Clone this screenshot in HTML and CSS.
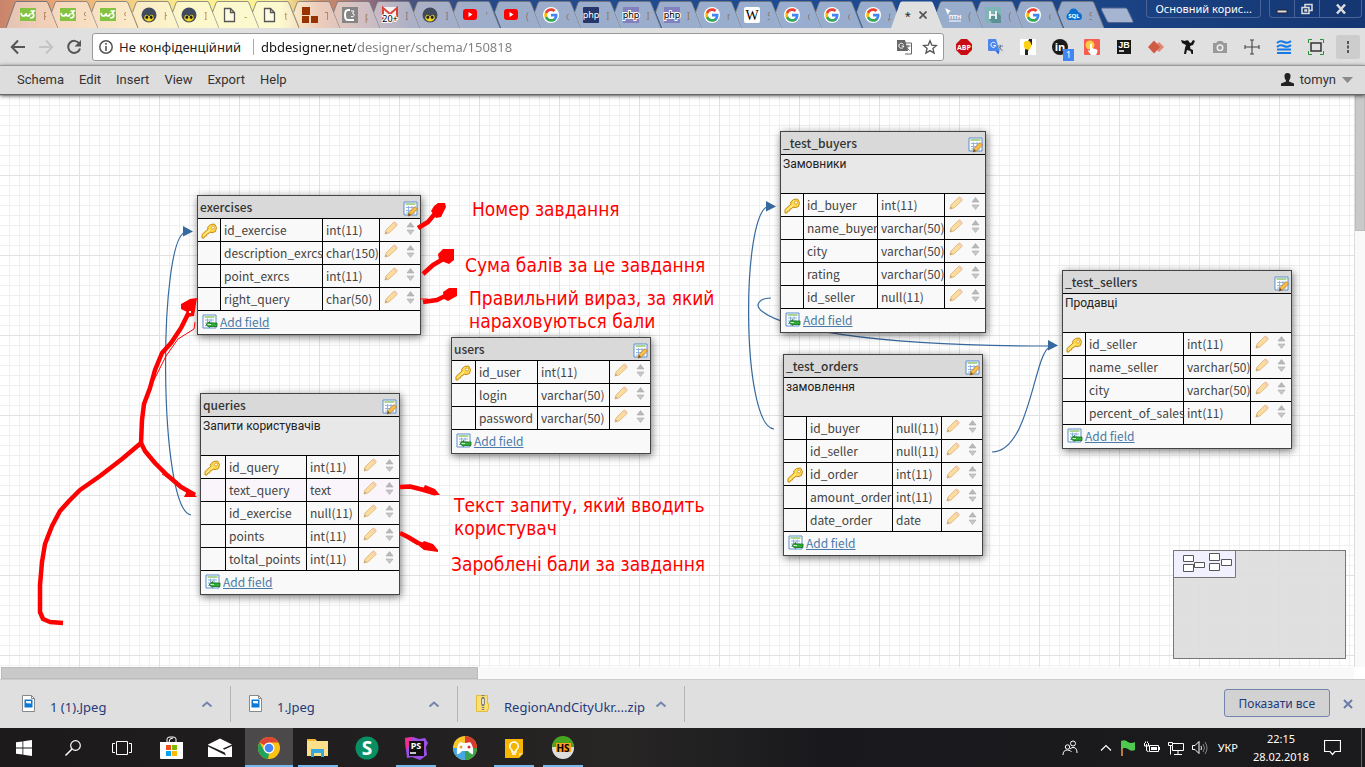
FILE: index.html
```html
<!DOCTYPE html>
<html lang="uk">
<head>
    <meta charset="UTF-8">
    <meta name="viewport" content="width=device-width, initial-scale=1.0">
    <title>dbdesigner.net</title>
    <link rel="stylesheet" href="styles.css">
</head>
<body>

<svg class="sprite" aria-hidden="true">
    <!-- tab outlines -->
    <symbol id="tab" viewBox="0 0 52 28"><path d="M12 28 5.7 12 9 3q.5-1.500 2-1.500h29q1.500 0 2 1.500L52 28z" fill="#fff" fill-opacity=".55"/><path d="M5.700 12 9 3q.5-1.500 2-1.500h29q1.500 0 2 1.500L52 28" fill="none" stroke="#777" stroke-opacity=".8"/></symbol>
    <symbol id="tab-first" viewBox="0 0 52 28"><path d="M0 28 9 3q.5-1.500 2-1.500h29q1.500 0 2 1.500L52 28" fill="#fff" fill-opacity=".5" stroke="#777"/></symbol>
    <symbol id="tab-active" viewBox="0 0 52 28"><path d="M0 28 9 3q.5-1.500 2-1.500h29q1.500 0 2 1.500L52 28" fill="#e0e0e0"/></symbol>

    <!-- favicons -->
    <symbol id="w3" viewBox="0 0 16 16"><path fill="#83c341" d="M0 1h16v13H0z"/><path d="M1 6q.5 3 2.500 3T6 6.500Q6.500 9 8 9t2-2.500M10.500 4H14l-2 2.500q2.500.5 1.500 3Q12.500 11.500 10 10.500" fill="none" stroke="#fff" stroke-width="1.700"/></symbol>
    <symbol id="beetle" viewBox="0 0 16 16"><circle cx="8" cy="8" r="7.500" fill="#3f4a5c"/><path d="M4 8.500q1.500-2 4 1 2.500-3 4-1 2 3-1 5-3 2-6 0-3-2-1-5z" fill="#f0d421"/><ellipse cx="5.800" cy="10.300" rx="1.400" ry="1.700" fill="#222"/><ellipse cx="10.200" cy="10.300" rx="1.400" ry="1.700" fill="#222"/></symbol>
    <symbol id="doc" viewBox="0 0 16 16"><path d="M3.500 1.500h6l4 4v9h-10zM9.500 1.500v4h4" fill="#fff" fill-opacity=".4" stroke="#555" stroke-width="1.300"/></symbol>
    <symbol id="blocks" viewBox="0 0 16 16"><path fill="#993300" d="M0 0h8v8H0zM0 9h7v7H0zM9 9h7v7H9z"/></symbol>
    <symbol id="cz" viewBox="0 0 16 16"><path fill="#858585" d="M0 0h16v16H0z"/><path d="M8 3H6Q3 3 3 8t3 5h6" fill="none" stroke="#fff" stroke-width="2"/><path d="M9 4h3L10.500 6.500q2 0 1.500 2t-3 1" fill="none" stroke="#fff"/></symbol>
    <symbol id="youtube" viewBox="0 0 16 16"><rect x="1" y="2" width="14" height="11" rx="3" fill="#f00"/><path d="m6.500 5 4 2.500-4 2.500z" fill="#fff"/></symbol>
    <symbol id="google" viewBox="-1 -1 26 26"><circle cx="12" cy="12" r="13" fill="#fff"/><path fill="#4285f4" d="M22.560 12.250c0-.78-.07-1.530-.2-2.250H12v4.260h5.920c-.26 1.370-1.040 2.530-2.210 3.310v2.770h3.570c2.080-1.920 3.280-4.740 3.280-8.090z"/><path fill="#34a853" d="M12 23c2.970 0 5.460-.98 7.280-2.660l-3.570-2.770c-.98.66-2.230 1.060-3.710 1.060-2.860 0-5.290-1.930-6.160-4.530H2.180v2.840C3.990 20.530 7.700 23 12 23z"/><path fill="#fbbc05" d="M5.840 14.090c-.22-.66-.35-1.360-.35-2.090s.13-1.430.35-2.090V7.070H2.180C1.430 8.550 1 10.220 1 12s.43 3.450 1.180 4.930l3.660-2.840z"/><path fill="#ea4335" d="M12 5.380c1.620 0 3.060.56 4.210 1.640l3.150-3.150C17.450 2.090 14.970 1 12 1 7.700 1 3.990 3.470 2.180 7.070l3.660 2.840c.87-2.600 3.300-4.530 6.160-4.530z"/></symbol>
    <symbol id="h-box" viewBox="0 0 16 16"><path fill="#7fb5b5" d="M0 0h16v16H0z"/><path d="m11 4 5 5v7H7l-3-4z" fill="#5d9294"/><path d="M5 4v8M11 4v8M5 8h6" stroke="#fff" stroke-width="1.700"/></symbol>

    <!-- diagram icons -->
    <symbol id="key" viewBox="0 0 16 16"><path d="M9.500 1.500 13.500 1l2 3.500-1 4-3.500 1.200-2-.7-1 1.500-2 .5-.5 2-2 .2L3 15H1v-3.500l6-5.500-.3-2z" fill="#ffd94d" stroke="#c98c13"/><path d="m2 13.500 7-6.500" stroke="#fff3ae"/><circle cx="12" cy="4.500" r="1.500" fill="#fff" stroke="#c98c13" stroke-width=".7"/></symbol>
    <symbol id="pencil" viewBox="0 0 14 14"><path d="m1 13 1-4 7.500-7.500 1.500-.5L13 3v1.500L5 12z" fill="#fbdca0" stroke="#e2b878" stroke-width=".9"/><path d="m9 2.500 2.500 2.500L13 4V2.500L11.500 1z" fill="#f3ccb5"/><path d="m1 13 .7-2.500L3.500 12z" fill="#b9a48a"/></symbol>
    <symbol id="updown" viewBox="0 0 9 13"><path d="M4.500.500 8 5H1z" fill="#b8b8b8" stroke="#aaa" stroke-width=".6"/><path d="M1 8h7l-3.500 4.500z" fill="#c8c8c8" stroke="#aaa" stroke-width=".6"/></symbol>
    <symbol id="table-edit" viewBox="0 0 16 16"><path d="M1 1h13v13H1z" fill="#fff" stroke="#5b8dcc"/><path d="M2.500 3h10" stroke="#82bd55" stroke-width="1.300"/><path d="M3 6.500h9M3 9.500h9M3 12h9M5.500 5v8M9 5v8" stroke="#91b4e0"/><path d="m5 15 1-3.500 6-6L14.500 8l-6 6z" fill="#f9bd49" stroke="#b97218" stroke-width=".7"/><path d="m6 12 2 2-3 1z" fill="#6d5030"/></symbol>
    <symbol id="table-add" viewBox="0 0 16 15"><path d="M1 .500h13v13H1z" fill="#fff" stroke="#5b8dcc"/><path d="M2.500 2.500h10" stroke="#82bd55" stroke-width="1.300"/><path d="M3 5.500h9M3 8.500h9M3 11h9M5.500 4v8M9 4v8" stroke="#8aaed8"/><path d="m4 10 3.500-3v1.500h7.500v3.500H7.500V13z" fill="#2eae35" stroke="#176c1c" stroke-width=".8"/><path d="M5.500 10H9" stroke="#cfeecf"/></symbol>
    <symbol id="chevron" viewBox="0 0 12 8"><path d="m1.500 6.500 4.500-4 4.500 4" fill="none" stroke="#7484ac" stroke-width="2"/></symbol>
    <symbol id="jpeg" viewBox="0 0 13 17"><path d="M.500.500h9l3 3v13H.500z" fill="#fff" stroke="#888"/><path d="M9.500.500v3h3" fill="none" stroke="#888"/><path d="M2.500 4.500h8v8h-8z" fill="#0d79d5"/><path d="M4 6h5v2L8 9 7 7.500 6 9 5 7.500 4 8.500z" fill="#fff"/></symbol>
</svg>

<header class="tabstrip">
    <nav class="tabs">
        <a class="tab" href="#"><svg class="tab-shape"><use href="#tab-first"/></svg><svg class="favicon"><use href="#w3"/></svg><span class="tab-title">F</span></a>
        <a class="tab" href="#"><svg class="tab-shape"><use href="#tab"/></svg><svg class="favicon"><use href="#w3"/></svg><span class="tab-title">S</span></a>
        <a class="tab" href="#"><svg class="tab-shape"><use href="#tab"/></svg><svg class="favicon"><use href="#w3"/></svg><span class="tab-title">S</span></a>
        <a class="tab" href="#"><svg class="tab-shape"><use href="#tab"/></svg><svg class="favicon"><use href="#beetle"/></svg><span class="tab-title">H</span></a>
        <a class="tab" href="#"><svg class="tab-shape"><use href="#tab"/></svg><svg class="favicon"><use href="#beetle"/></svg><span class="tab-title">I</span></a>
        <a class="tab" href="#"><svg class="tab-shape"><use href="#tab"/></svg><svg class="favicon"><use href="#doc"/></svg><span class="tab-title">-</span></a>
        <a class="tab" href="#"><svg class="tab-shape"><use href="#tab"/></svg><svg class="favicon"><use href="#doc"/></svg><span class="tab-title">t</span></a>
        <a class="tab" href="#"><svg class="tab-shape"><use href="#tab"/></svg><svg class="favicon"><use href="#blocks"/></svg><span class="tab-title">T</span></a>
        <a class="tab" href="#"><svg class="tab-shape"><use href="#tab"/></svg><svg class="favicon"><use href="#cz"/></svg><span class="tab-title">p</span></a>
        <a class="tab" href="#"><svg class="tab-shape"><use href="#tab"/></svg><svg class="favicon" viewBox="0 0 16 16"><path fill="#f4f4f4" d="M0 0h16v12H0z"/><path d="M1 12V1l7 6 7-6v11" fill="none" stroke="#db4437" stroke-width="2"/><text x="8" y="15" class="fav-text">20+</text></svg><span class="tab-title">I</span></a>
        <a class="tab" href="#"><svg class="tab-shape"><use href="#tab"/></svg><svg class="favicon"><use href="#beetle"/></svg><span class="tab-title">I</span></a>
        <a class="tab" href="#"><svg class="tab-shape"><use href="#tab"/></svg><svg class="favicon"><use href="#youtube"/></svg><span class="tab-title">'</span></a>
        <a class="tab" href="#"><svg class="tab-shape"><use href="#tab"/></svg><svg class="favicon"><use href="#youtube"/></svg><span class="tab-title">(</span></a>
        <a class="tab" href="#"><svg class="tab-shape"><use href="#tab"/></svg><svg class="favicon"><use href="#google"/></svg><span class="tab-title">c</span></a>
        <a class="tab" href="#"><svg class="tab-shape"><use href="#tab"/></svg><svg class="favicon" viewBox="0 0 16 16"><rect width="16" height="16" rx="1" fill="#26366b"/><text x="8" y="11" class="fav-text fav-light">php</text></svg><span class="tab-title">I</span></a>
        <a class="tab" href="#"><svg class="tab-shape"><use href="#tab"/></svg><svg class="favicon" viewBox="0 0 16 16"><path fill="#8280bd" d="M0 0h16v16H0z"/><text x="8" y="11" class="fav-text">php</text></svg><span class="tab-title">I</span></a>
        <a class="tab" href="#"><svg class="tab-shape"><use href="#tab"/></svg><svg class="favicon" viewBox="0 0 16 16"><path fill="#8280bd" d="M0 0h16v16H0z"/><text x="8" y="11" class="fav-text">php</text></svg><span class="tab-title">I</span></a>
        <a class="tab" href="#"><svg class="tab-shape"><use href="#tab"/></svg><svg class="favicon"><use href="#google"/></svg><span class="tab-title">r</span></a>
        <a class="tab" href="#"><svg class="tab-shape"><use href="#tab"/></svg><svg class="favicon" viewBox="0 0 16 16"><rect width="16" height="16" rx="2" fill="#fff"/><text x="8" y="13" class="fav-wiki">W</text></svg><span class="tab-title">S</span></a>
        <a class="tab" href="#"><svg class="tab-shape"><use href="#tab"/></svg><svg class="favicon"><use href="#google"/></svg><span class="tab-title">c</span></a>
        <a class="tab" href="#"><svg class="tab-shape"><use href="#tab"/></svg><svg class="favicon"><use href="#google"/></svg><span class="tab-title">c</span></a>
        <a class="tab" href="#"><svg class="tab-shape"><use href="#tab"/></svg><svg class="favicon"><use href="#google"/></svg><span class="tab-title">д</span></a>
        <div class="tab active"><svg class="tab-shape"><use href="#tab-active"/></svg><span>*</span><button class="tab-close" aria-label="Закрити"><svg viewBox="0 0 8 8" width="8" height="8"><path d="m.500.500 7 7m0-7-7 7" stroke="#555" stroke-width="1.700"/></svg></button></div>
        <a class="tab" href="#"><svg class="tab-shape"><use href="#tab"/></svg><svg class="favicon" viewBox="0 0 16 16"><path d="m0 1 6 3-2 1-1 3z" fill="#fff"/><text x="10" y="12" class="fav-text fav-small">ПТН</text><path d="M4 14h12" stroke="#fff"/></svg><span class="tab-title">(</span></a>
        <a class="tab" href="#"><svg class="tab-shape"><use href="#tab"/></svg><svg class="favicon"><use href="#h-box"/></svg><span class="tab-title">(</span></a>
        <a class="tab" href="#"><svg class="tab-shape"><use href="#tab"/></svg><svg class="favicon"><use href="#google"/></svg><span class="tab-title">c</span></a>
        <a class="tab" href="#"><svg class="tab-shape"><use href="#tab"/></svg><svg class="favicon" viewBox="0 0 16 16"><path d="M3 13q-3-1-2.500-4T3 6q1-5 5-4.500 3 0 4 3.500 4 1 4 4.500T13 13z" fill="#0b6fcf"/><text x="8" y="11" class="fav-text fav-small">SQL</text></svg><span class="tab-title">S</span></a>
    </nav>
    <button class="new-tab" aria-label="Нова вкладка"><svg viewBox="0 0 34 17" width="34" height="17"><path d="M2.500 1h23q1.500 0 2 1.500L33 14q.5 1.500-1 1.500H9q-1.500 0-2-1.500L1.500 3Q1 1 2.500 1z" fill="#a5b4d0" stroke="#52668f"/></svg></button>
    <button class="profile">Основний корис...</button>
    <div class="window-buttons">
        <button aria-label="Згорнути"><svg viewBox="0 0 12 12" width="12" height="12"><path d="M1 7h10v3H1z" fill="#ddd" stroke="#223"/></svg></button>
        <button aria-label="Відновити"><svg viewBox="0 0 12 12" width="12" height="12"><path d="M4 4V1.500h7v6H8.500M1 4.500h7v6H1zM4 7h1.500v1H4z" fill="none" stroke="#ddd" stroke-width="1.500"/></svg></button>
        <button class="wide" aria-label="Закрити вікно"><svg viewBox="0 0 12 12" width="12" height="12"><path d="m2 1.500 8 9m0-9-8 9" stroke="#ddd" stroke-width="2.500"/></svg></button>
    </div>
</header>

<div class="toolbar">
    <button aria-label="Назад"><svg viewBox="0 0 16 16" width="16" height="16"><path d="M15 8H2.500M8 1.500 1.800 8 8 14.500" fill="none" stroke="#555" stroke-width="2"/></svg></button>
    <button aria-label="Вперед"><svg viewBox="0 0 16 16" width="16" height="16"><path d="M1 8h12.500M8 1.500 14.200 8 8 14.500" fill="none" stroke="#c4c4c4" stroke-width="2"/></svg></button>
    <button aria-label="Оновити"><svg viewBox="0 0 16 16" width="16" height="16"><path d="M13.200 4.500A6 6 0 1 0 14 9.500" fill="none" stroke="#555" stroke-width="2"/><path d="M15 1v6.500H8.500z" fill="#555"/></svg></button>
    <div class="omnibox">
        <svg viewBox="0 0 14 14" width="14" height="14"><circle cx="7" cy="7" r="6.200" fill="none" stroke="#555" stroke-width="1.500"/><path d="M7 6v5M7 3v1.800" stroke="#555" stroke-width="1.600"/></svg>
        <label for="address">Не конфіденційний</label>
        <input id="address" type="text" value="dbdesigner.net/designer/schema/150818">
        <button aria-label="Перекласти"><svg viewBox="0 0 16 16" width="16" height="16"><path d="M6 4h9.500v11H9" fill="#fff" stroke="#666"/><path d="M1 1h8l3 11H1z" fill="#666"/><path d="M7.500 5.500A2.500 2.500 0 1 0 7.800 7H5.500" fill="none" stroke="#fff"/><path d="M9.500 7h5M12 6v1c0 2-1 3.500-2 4.500M10.500 8.500l3 3" fill="none" stroke="#666"/></svg></button>
        <button aria-label="Закладка"><svg viewBox="0 0 16 16" width="16" height="16"><path d="m8 1.800 1.800 4.300 4.700.4-3.600 3 1.200 4.600L8 11.600l-4.100 2.500 1.200-4.600-3.600-3 4.700-.4z" fill="none" stroke="#555" stroke-width="1.300"/></svg></button>
    </div>
    <div class="extensions">
        <button aria-label="ABP"><svg viewBox="0 0 16 16" width="16" height="16"><path d="M5 0h6l5 5v6l-5 5H5l-5-5V5z" fill="#c70d12"/><text x="8" y="11" class="ext-abp">ABP</text></svg></button>
        <button aria-label="Перекладач"><svg viewBox="0 0 16 16" width="16" height="16"><path d="M6 4h9.500v11.500H10z" fill="#ddd"/><path d="M0 1q0-1 1-1h7l3.500 12H1q-1 0-1-1z" fill="#4b87ea"/><path d="m7.500 12 3 3.500 1-3.500z" fill="#3367d6"/><path d="M7.500 4.500A2.500 2.500 0 1 0 7.800 6.500H5.500" fill="none" stroke="#fff"/><path d="M10 7h5M12.500 6v1c0 2-.5 3-1 4M11 8l3.500 4" fill="none" stroke="#6b7f99"/></svg></button>
        <button aria-label="Маркер"><svg viewBox="0 0 16 16" width="16" height="16"><path fill="#fff" d="M0 0h16v16H0z"/><path d="M9 0h3v5l-4 7v4H5v-5z" fill="#222"/><path d="M4 3q5-3 7 1 1 4-2 7l-4-1q-2-3-1-7z" fill="#fcd116"/></svg></button>
        <button aria-label="in"><svg viewBox="0 0 16 16" width="16" height="16"><circle cx="8" cy="8" r="8" fill="#1b1b1b"/><text x="8" y="12" class="ext-in">in</text></svg><span class="badge">1</span></button>
        <button aria-label="Клік"><svg viewBox="0 0 16 16" width="16" height="16"><rect width="16" height="16" rx="1" fill="#f45d4f"/><circle cx="6" cy="6" r="4.500" fill="#fdcb45"/><path d="M6 5q1-1 2 0v4l5 1.500q1 1 0 3.500l-1 2H7l-3-4q0-1.500 2 0z" fill="#fff"/></svg></button>
        <button aria-label="JetBrains"><svg viewBox="0 0 16 16" width="16" height="16"><path fill="#161616" d="M1 1h14v14H1z"/><text x="8" y="9" class="ext-jb">JB</text><path d="M3 12h5" stroke="#fff" stroke-width="1.500"/></svg></button>
        <button aria-label="Ромби"><svg viewBox="0 0 16 16" width="16" height="16"><path d="m11 3 5 5-5 5-5-5z" fill="#e08672"/><path d="m6 1.500 6 6.500-6 6.500L0 8z" fill="#cf5b45"/></svg></button>
        <button aria-label="Ніндзя"><svg viewBox="0 0 16 16" width="16" height="16"><path d="M1 1 5 2q2-1 3 1l3 1 2-3 2 1-2 4-3 1 .5 3L13 11v4h-1.500l-1-3L7 11l-1 4H4l1-6 1-3-4-2z" fill="#151515"/><circle cx="7" cy="3.500" r="2.200" fill="#151515"/></svg></button>
        <button aria-label="Камера"><svg viewBox="0 0 16 16" width="16" height="16"><path d="M1 4h3l2-2h4l2 2h3v10H1z" fill="#999"/><circle cx="8" cy="8.700" r="3.500" fill="#eee"/><circle cx="8" cy="8.700" r="2" fill="#999"/></svg></button>
        <button aria-label="Приціл"><svg viewBox="0 0 16 16" width="16" height="16"><path d="M8 1v14M1 8h14M6 1h4M6 15h4M1 6v4M15 6v4" stroke="#444" stroke-width="1.100"/></svg></button>
        <button aria-label="Хвилі"><svg viewBox="0 0 16 16" width="16" height="16"><path d="M1 4q3-3 7-1t7-1M1 8q3-3 7-1t7-1M1 10.500h14M1 14h14" fill="none" stroke="#1679e5" stroke-width="2"/></svg></button>
        <button aria-label="Рамка"><svg viewBox="0 0 16 16" width="16" height="16"><path d="M3 4h10v8H3z" fill="none" stroke="#333" stroke-width="1.500"/><path d="M.500 4V.500H4M12 .500h3.500V4M15.500 12v3.500H12M4 15.500H.500V12" fill="none" stroke="#279131"/></svg></button>
        <button class="more" aria-label="Меню"><svg viewBox="0 0 16 16" width="16" height="16"><path d="M7 2h2v3H7zM7 6.500h2v3H7zM7 11h2v3H7z" fill="#555"/></svg></button>
    </div>
</div>

<nav class="menubar">
    <button>Schema</button>
    <button>Edit</button>
    <button>Insert</button>
    <button>View</button>
    <button>Export</button>
    <button>Help</button>
    <button class="user">
        <svg viewBox="0 0 13 13" width="13" height="13"><path d="M6.500 0Q10 0 9.500 4 9 7 8 7.500v1L13 10.500V13H0v-2.500l5-2v-1Q4 7 3.500 4 3 0 6.500 0z" fill="#222"/></svg>
        tomyn
        <svg viewBox="0 0 11 6" width="11" height="6"><path d="M0 0h11L5.500 6z" fill="#8a8a8a"/></svg>
    </button>
</nav>

<main class="workspace">
    <div class="canvas">
        <svg class="links">
            <g transform="translate(0 -95)" fill="none" stroke="#36699f" stroke-width="1.200">
                <path d="M191 515C158 510 158 235 186 232"/>
                <path d="M774 429C741 426 741 210 769 206"/>
                <path d="M771 298C758 298 754 306 763 312C783 327 860 346 1050 346"/>
                <path d="M992 452C1030 452 1034 352 1050 347"/>
            </g>
            <g transform="translate(0 -95)" fill="#36699f">
                <path d="m183 226 10 5.500-10 5zM766 201l10 5.500-10 5zM1048 340l10 5.500-10 5z"/>
            </g>
        </svg>

        <section class="entity exercises">
            <h2>exercises <button aria-label="Edit table"><svg class="icon"><use href="#table-edit"/></svg></button></h2>
            <table>
                <tr><td class="col-key"><svg class="icon"><use href="#key"/></svg></td><td class="col-name">id_exercise</td><td class="col-type">int(11)</td><td><svg class="pencil"><use href="#pencil"/></svg><svg class="updown"><use href="#updown"/></svg></td></tr>
                <tr><td></td><td>description_exrcs</td><td>char(150)</td><td><svg class="pencil"><use href="#pencil"/></svg><svg class="updown"><use href="#updown"/></svg></td></tr>
                <tr><td></td><td>point_exrcs</td><td>int(11)</td><td><svg class="pencil"><use href="#pencil"/></svg><svg class="updown"><use href="#updown"/></svg></td></tr>
                <tr><td></td><td>right_query</td><td>char(50)</td><td><svg class="pencil"><use href="#pencil"/></svg><svg class="updown"><use href="#updown"/></svg></td></tr>
            </table>
            <footer><svg class="icon"><use href="#table-add"/></svg><a href="#">Add field</a></footer>
        </section>

        <section class="entity queries">
            <h2>queries <button aria-label="Edit table"><svg class="icon"><use href="#table-edit"/></svg></button></h2>
            <p>Запити користувачів</p>
            <table>
                <tr><td class="col-key"><svg class="icon"><use href="#key"/></svg></td><td class="col-name">id_query</td><td class="col-type">int(11)</td><td><svg class="pencil"><use href="#pencil"/></svg><svg class="updown"><use href="#updown"/></svg></td></tr>
                <tr class="selected"><td></td><td>text_query</td><td>text</td><td><svg class="pencil"><use href="#pencil"/></svg><svg class="updown"><use href="#updown"/></svg></td></tr>
                <tr><td></td><td>id_exercise</td><td>null(11)</td><td><svg class="pencil"><use href="#pencil"/></svg><svg class="updown"><use href="#updown"/></svg></td></tr>
                <tr><td></td><td>points</td><td>int(11)</td><td><svg class="pencil"><use href="#pencil"/></svg><svg class="updown"><use href="#updown"/></svg></td></tr>
                <tr><td></td><td>toltal_points</td><td>int(11)</td><td><svg class="pencil"><use href="#pencil"/></svg><svg class="updown"><use href="#updown"/></svg></td></tr>
            </table>
            <footer><svg class="icon"><use href="#table-add"/></svg><a href="#">Add field</a></footer>
        </section>

        <section class="entity users">
            <h2>users <button aria-label="Edit table"><svg class="icon"><use href="#table-edit"/></svg></button></h2>
            <table>
                <tr><td class="col-key"><svg class="icon"><use href="#key"/></svg></td><td class="col-name">id_user</td><td class="col-type">int(11)</td><td><svg class="pencil"><use href="#pencil"/></svg><svg class="updown"><use href="#updown"/></svg></td></tr>
                <tr><td></td><td>login</td><td>varchar(50)</td><td><svg class="pencil"><use href="#pencil"/></svg><svg class="updown"><use href="#updown"/></svg></td></tr>
                <tr><td></td><td>password</td><td>varchar(50)</td><td><svg class="pencil"><use href="#pencil"/></svg><svg class="updown"><use href="#updown"/></svg></td></tr>
            </table>
            <footer><svg class="icon"><use href="#table-add"/></svg><a href="#">Add field</a></footer>
        </section>

        <section class="entity buyers">
            <h2>_test_buyers <button aria-label="Edit table"><svg class="icon"><use href="#table-edit"/></svg></button></h2>
            <p>Замовники</p>
            <table>
                <tr><td class="col-key"><svg class="icon"><use href="#key"/></svg></td><td class="col-name">id_buyer</td><td class="col-type">int(11)</td><td><svg class="pencil"><use href="#pencil"/></svg><svg class="updown"><use href="#updown"/></svg></td></tr>
                <tr><td></td><td>name_buyer</td><td>varchar(50)</td><td><svg class="pencil"><use href="#pencil"/></svg><svg class="updown"><use href="#updown"/></svg></td></tr>
                <tr><td></td><td>city</td><td>varchar(50)</td><td><svg class="pencil"><use href="#pencil"/></svg><svg class="updown"><use href="#updown"/></svg></td></tr>
                <tr><td></td><td>rating</td><td>varchar(50)</td><td><svg class="pencil"><use href="#pencil"/></svg><svg class="updown"><use href="#updown"/></svg></td></tr>
                <tr><td></td><td>id_seller</td><td>null(11)</td><td><svg class="pencil"><use href="#pencil"/></svg><svg class="updown"><use href="#updown"/></svg></td></tr>
            </table>
            <footer><svg class="icon"><use href="#table-add"/></svg><a href="#">Add field</a></footer>
        </section>

        <section class="entity orders">
            <h2>_test_orders <button aria-label="Edit table"><svg class="icon"><use href="#table-edit"/></svg></button></h2>
            <p>замовлення</p>
            <table>
                <tr><td class="col-key"></td><td class="col-name">id_buyer</td><td class="col-type">null(11)</td><td><svg class="pencil"><use href="#pencil"/></svg><svg class="updown"><use href="#updown"/></svg></td></tr>
                <tr><td></td><td>id_seller</td><td>null(11)</td><td><svg class="pencil"><use href="#pencil"/></svg><svg class="updown"><use href="#updown"/></svg></td></tr>
                <tr><td class="col-key"><svg class="icon"><use href="#key"/></svg></td><td>id_order</td><td>int(11)</td><td><svg class="pencil"><use href="#pencil"/></svg><svg class="updown"><use href="#updown"/></svg></td></tr>
                <tr><td></td><td>amount_order</td><td>int(11)</td><td><svg class="pencil"><use href="#pencil"/></svg><svg class="updown"><use href="#updown"/></svg></td></tr>
                <tr><td></td><td>date_order</td><td>date</td><td><svg class="pencil"><use href="#pencil"/></svg><svg class="updown"><use href="#updown"/></svg></td></tr>
            </table>
            <footer><svg class="icon"><use href="#table-add"/></svg><a href="#">Add field</a></footer>
        </section>

        <section class="entity sellers">
            <h2>_test_sellers <button aria-label="Edit table"><svg class="icon"><use href="#table-edit"/></svg></button></h2>
            <p>Продавці</p>
            <table>
                <tr><td class="col-key"><svg class="icon"><use href="#key"/></svg></td><td class="col-name">id_seller</td><td class="col-type">int(11)</td><td><svg class="pencil"><use href="#pencil"/></svg><svg class="updown"><use href="#updown"/></svg></td></tr>
                <tr><td></td><td>name_seller</td><td>varchar(50)</td><td><svg class="pencil"><use href="#pencil"/></svg><svg class="updown"><use href="#updown"/></svg></td></tr>
                <tr><td></td><td>city</td><td>varchar(50)</td><td><svg class="pencil"><use href="#pencil"/></svg><svg class="updown"><use href="#updown"/></svg></td></tr>
                <tr><td></td><td>percent_of_sales</td><td>int(11)</td><td><svg class="pencil"><use href="#pencil"/></svg><svg class="updown"><use href="#updown"/></svg></td></tr>
            </table>
            <footer><svg class="icon"><use href="#table-add"/></svg><a href="#">Add field</a></footer>
        </section>

        <!-- hand-drawn notes -->
        <svg class="links marks">
            <g transform="translate(0 -95)" fill="none" stroke="#f00" stroke-width="4.500" stroke-linejoin="round">
                <path d="M190 310 181 328 171 343 162 353 155 370 150 388 144 404 142 420 141 443 122 459 100 476 80 490 70 500 60 511 52 526 45 544 42 562 40 585 40 612 43 619 50 622 63 623"/>
                <path d="m141 443 4 8 10 12 12 12 14 12 14 8"/>
                <path d="m418 228 10-6 10-12M423 274l10-9 12-7M423 302l14-2 12-6M400 487l10-.5 12 3 14 4M400 533l8 4 10 6 16 6"/>
                <path d="m195 322-1 7-16 10-12 17-11 22-7 14M420 299h8M162 474l8 5" stroke-width="1"/>
            </g>
            <g transform="translate(0 -95)" fill="#f00">
                <path d="m181 304 9-5 7-1-3 18-7 1v-5l-6-3zM187 488l10 9h-13l2-4zM434 206l4-3h7l1 4-5 10-5 1-5-7zM438 254l5-5h11v11l-5 4-10-4zM443 292l6-4h8v8l-9 5-4-2zM425 485l10 4 5 6h-7l-11-4zM424 541l9 3 5 6v2l-14-2-5-4z"/>
                <path d="M189 311h2v2h-2z" fill="#fff"/>
            </g>
        </svg>
        <p class="note note-number">Номер завдання</p>
        <p class="note note-sum">Сума балів за це завдання</p>
        <p class="note note-right">Правильний вираз, за який<br>нараховуються бали</p>
        <p class="note note-text">Текст запиту, який вводить<br>користувач</p>
        <p class="note note-points">Зароблені бали за завдання</p>

        <div class="minimap">
            <svg viewBox="0 0 64 28" width="64" height="28"><path d="M.500.500h62v27H.500z" fill="#f0f0ff" stroke="#777"/><path d="M10.500 5.500h10v6h-10zM10.500 14.500h10v7h-10zM21.500 12.500h10v5h-10zM36.500 3.500h10v7h-10zM36.500 13.500h10v7h-10zM48.500 9.500h10v6h-10z" fill="#fff" stroke="#555"/></svg>
        </div>
    </div>
    <div class="vscroll"><div class="vthumb"></div></div>
    <div class="hscroll"><div class="hthumb"></div></div>
</main>

<section class="downloads">
    <div class="download"><svg class="file-icon"><use href="#jpeg"/></svg><a href="#">1 (1).Jpeg</a><button aria-label="Дії"><svg class="chevron"><use href="#chevron"/></svg></button></div>
    <div class="download"><svg class="file-icon"><use href="#jpeg"/></svg><a href="#">1.Jpeg</a><button aria-label="Дії"><svg class="chevron"><use href="#chevron"/></svg></button></div>
    <div class="download"><svg class="file-icon" viewBox="0 0 13 17"><path d="M.500.500h11v8h1v6h-1v2H.500z" fill="#fbdf72" stroke="#e5bd3c"/><path d="M7 0v16" stroke="#777" stroke-width="2.500" stroke-dasharray="1 1"/><path d="M5.500 3.500h3v6h-3z" fill="#ddd" stroke="#888"/></svg><a href="#">RegionAndCityUkr....zip</a><button aria-label="Дії"><svg class="chevron"><use href="#chevron"/></svg></button></div>
    <button class="show-all">Показати все</button>
    <button class="close-bar" aria-label="Закрити"><svg viewBox="0 0 10 10" width="10" height="10"><path d="m1 1 8 8m0-8-8 8" stroke="#6a7ca8" stroke-width="2"/></svg></button>
</section>

<footer class="taskbar">
    <button aria-label="Пуск"><svg viewBox="0 0 16 16" width="16" height="16"><path d="m0 2.300 6.500-.9v6.200H0zM7.300 1.300 16 0v7.600H7.300zM0 8.400h6.500v6.200L0 13.700zM7.300 8.400H16V16l-8.700-1.300z" fill="#fff"/></svg></button>
    <button aria-label="Пошук"><svg viewBox="0 0 16 16" width="16" height="16"><circle cx="10.500" cy="5.500" r="4.800" fill="none" stroke="#fff" stroke-width="1.200"/><path d="M7 9 .500 15.500" stroke="#fff" stroke-width="1.500"/></svg></button>
    <button aria-label="Подання завдань"><svg viewBox="0 0 20 16" width="20" height="16"><path d="M4.500 1.500h11v13h-11zM3 3.500H.500v9H3M17 3.500h2.500v9H17" fill="none" stroke="#fff"/></svg></button>
    <button aria-label="Store"><svg viewBox="0 0 24 24" width="24" height="24"><path d="M1 6h23v16q0 1-1 1H2q-1 0-1-1z" fill="#fff"/><path d="M8 6V3q0-2 3-2h3q3 0 3 2v3M10 6q0-4 4-4" fill="none" stroke="#fff"/><path d="M7 9h5v5H7z" fill="#f25022"/><path d="M13 9h5v5h-5z" fill="#7fba00"/><path d="M7 15h5v5H7z" fill="#00a4ef"/><path d="M13 15h5v5h-5z" fill="#ffb900"/></svg></button>
    <button aria-label="Пошта"><svg viewBox="0 0 24 20" width="24" height="20"><path d="m0 6.500 12-6 12 6-9 4 4 5L0 7zM0 8.500l18 9L15.500 12 24 8v11H0z" fill="#fff"/></svg></button>
    <button class="current" aria-label="Chrome"><svg viewBox="0 0 24 24" width="24" height="24"><circle cx="12" cy="12" r="11" fill="#fbc116"/><path d="M12 12 2.500 6.500A11 11 0 0 1 21.500 6.500H12z" fill="#dc4436"/><path d="m2.500 6.500 5 8.500 4.500 2.500L11 23A11 11 0 0 1 2.500 6.500z" fill="#1fa35c"/><circle cx="12" cy="12" r="5.500" fill="#fff"/><circle cx="12" cy="12" r="4.300" fill="#4285f4"/></svg></button>
    <button class="running" aria-label="Провідник"><svg viewBox="0 0 24 20" width="24" height="20"><path d="M1 1h8l2 2h11v15H1z" fill="#fbe089"/><path d="M1 1h8l1 2H1z" fill="#f2b733"/><path d="M5 11h13v8h-3v-4H8v4H5z" fill="#35a9df"/></svg></button>
    <button aria-label="S"><svg viewBox="0 0 24 24" width="24" height="24"><circle cx="12" cy="12" r="11.500" fill="#098f64"/><text x="12" y="19" class="app-s">S</text></svg></button>
    <button class="running" aria-label="PhpStorm"><svg viewBox="0 0 24 24" width="24" height="24"><path d="m1 2 8-1 6 2 6-1 3 5-2 4 1 8-7 5-8-3-5 1-1-8z" fill="#9b4ee8"/><path d="m1 2 8-1-4 9-3 4z" fill="#ef2f93"/><path d="M5 5h15v15H5z" fill="#111"/><text x="12" y="13" class="app-ps">PS</text><path d="M6 17h6" stroke="#fff" stroke-width="1.500"/></svg></button>
    <button aria-label="Ігри"><svg viewBox="0 0 24 24" width="24" height="24"><circle cx="12" cy="12" r="12" fill="#f8c52c"/><path d="M12 0a12 12 0 0 1 12 12H12z" fill="#d93b31"/><path d="M24 12a12 12 0 0 1-12 12V12z" fill="#3ca14c"/><path d="M12 24A12 12 0 0 1 0 12h12z" fill="#45a6e6"/><path d="M7 6q5 2 10 0 4 4 3 12-2 1-5-3H9q-3 4-5 3Q3 10 7 6z" fill="#fff"/><circle cx="8" cy="11" r="1.500" fill="#e8a030"/><circle cx="16" cy="11" r="1.500" fill="#c33"/></svg></button>
    <button class="running" aria-label="Keep"><svg viewBox="0 0 20 20" width="20" height="20"><path d="M1 1h18v15l-4 4H1z" fill="#f6b500"/><path d="m19 15-4 4v-4z" fill="#fbdf88"/><path d="M8 14v-2q-3-2-2-5 1-3 4-3t4 3q1 3-2 5v2zM8 16h4" fill="none" stroke="#fff" stroke-width="1.500"/></svg></button>
    <button class="running" aria-label="HS"><svg viewBox="0 0 24 24" width="24" height="24"><circle cx="12" cy="12" r="11" fill="#ddd"/><path d="M1 11a11 11 0 0 1 22 0z" fill="#48a51f"/><path d="M5 7h15v9H5z" fill="#ff9d21"/><text x="12" y="16" class="app-hs">HS</text></svg></button>

    <div class="tray">
        <svg viewBox="0 0 16 16" width="16" height="16"><circle cx="5.500" cy="7" r="2.200" fill="none" stroke="#fff"/><circle cx="11" cy="3.500" r="2.500" fill="none" stroke="#fff"/><path d="M1 15q0-5 4.500-5 3 0 4 2M8 9q2-2 4-1.500 3 .5 3 5.500" fill="none" stroke="#fff"/></svg>
        <svg class="tray-up" viewBox="0 0 12 8" width="12" height="8"><path d="m1 6.500 5-5 5 5" fill="none" stroke="#fff" stroke-width="1.200"/></svg>
        <svg viewBox="0 0 16 16" width="16" height="16"><path d="M2 4v12" stroke="#b97b45" stroke-width="2"/><path d="M1 1q4-2 7 1 3 2 7 0v8q-4 2-7-1-3-2-7 0z" fill="#4ecb4e"/></svg>
        <svg viewBox="0 0 16 16" width="16" height="16"><path d="M5.500 5.500h9v6h-9zM15.500 7v3M2.500 4v6q0 1.500 2 1.500M.500 3v3h4V3M1.500 1.500V3M3.500 1.500V3" fill="none" stroke="#fff"/><path d="M7 7h6v3H7z" fill="#fff"/></svg>
        <svg viewBox="0 0 16 16" width="16" height="16"><path d="M5 3.500h10.500v7H4.500V6M10 10.500v4M6 14.500h8M.500 2.500h4v3h-4zM2.500 5.500v9" fill="none" stroke="#fff"/></svg>
        <svg viewBox="0 0 16 16" width="16" height="16"><path d="M.500 5.500H3l4-4v12l-4-4H.500zM9 6q1 1.500 0 4" fill="none" stroke="#fff"/><path d="M11 4q3 4 0 8M13 2q4 6 0 12" fill="none" stroke="#888"/></svg>
        <button class="lang">УКР</button>
        <time class="clock">22:15<br>28.02.2018</time>
        <svg viewBox="0 0 17 17" width="17" height="17"><path d="M.500 1.500h16v11H11l-2.500 3-2.500-3H.500z" fill="none" stroke="#fff" stroke-width="1.200"/></svg>
    </div>
</footer>

</body>
</html>
```
FILE: styles.css
```css
* {
    box-sizing: border-box;
}
body {
    display: flex;
    flex-direction: column;
    height: 100vh;
    margin: 0;
    overflow: hidden;
    font-family: "Noto Sans", sans-serif;
    font-size: 13px;
    background-color: #fff;
}
button {
    display: flex;
    align-items: center;
    justify-content: center;
    padding: 0;
    border: none;
    background: none;
    color: inherit;
    font: inherit;
    cursor: pointer;
}
.sprite {
    position: absolute;
    width: 0;
    height: 0;
}

/* tab strip */
.tabstrip {
    display: flex;
    flex: none;
    height: 28px;
    padding-left: 6px;
    background: linear-gradient(90deg, #c8836b 0, #eba872 60px, #fbf08e 190px, #fbf396 280px, #d58d68 320px, #8f6c7d 370px, #4a5280 410px, #26498a 480px, #1c4b94 800px, #1b4486 1100px, #143672 100%);
}
.tabs {
    display: flex;
    flex: 0 1 1086px;
}
.tab {
    position: relative;
    display: flex;
    flex: 1 1 0;
    align-items: center;
    gap: 7px;
    min-width: 0;
    padding: 2px 0 0 14px;
    color: #8a5a30;
    font-size: 11px;
    text-decoration: none;
}
.tab-shape {
    position: absolute;
    top: 0;
    left: 0;
    width: 52px;
    height: 28px;
}
.favicon {
    position: relative;
    flex: none;
    width: 16px;
    height: 16px;
    overflow: visible;
}
.tab-title {
    position: relative;
    flex: none;
    width: 3px;
    overflow: hidden;
    opacity: .6;
}
.tab.active {
    gap: 8px;
    color: #222;
}
.tab.active span,
.tab-close {
    position: relative;
}
.new-tab {
    margin: 7px 0 0 8px;
    align-self: flex-start;
}
.profile {
    align-self: flex-start;
    height: 18px;
    margin-left: auto;
    padding: 0 8px;
    border: 1px solid #4a6498;
    border-top: none;
    border-radius: 0 0 4px 4px;
    color: #fff;
    font-size: 11px;
    white-space: nowrap;
}
.window-buttons {
    display: flex;
    height: 18px;
    margin: 0 3px 0 8px;
    border: 1px solid #4a6498;
    border-top: none;
    border-radius: 0 0 4px 4px;
}
.window-buttons button {
    width: 25px;
    border-right: 1px solid #4a6498;
}
.window-buttons .wide {
    width: 41px;
    border-right: none;
}
.fav-text {
    fill: #000;
    stroke: #fff;
    stroke-width: 2px;
    paint-order: stroke;
    font: 9px "Noto Sans", sans-serif;
    text-anchor: middle;
}
.fav-light {
    fill: #fff;
    stroke: none;
}
.fav-small {
    fill: #fff;
    stroke: none;
    font-size: 6px;
    font-weight: bold;
}
.fav-wiki {
    font: 14px "Liberation Serif", serif;
    text-anchor: middle;
}

/* toolbar */
.toolbar {
    display: flex;
    flex: none;
    align-items: center;
    gap: 12px;
    height: 37px;
    padding: 1px 5px 0 10px;
    background-color: #e0e0e0;
}
.omnibox {
    display: flex;
    flex: 1;
    align-items: center;
    gap: 10px;
    height: 28px;
    margin-left: -2px;
    padding: 0 5px 0 6px;
    border: 1px solid #999;
    border-radius: 3px;
    background-color: #fff;
}
.omnibox label {
    margin-left: -4px;
    padding-right: 12px;
    border-right: 1px solid #aaa;
    color: #222;
    line-height: 16px;
    white-space: nowrap;
}
.omnibox input {
    flex: 1;
    min-width: 0;
    margin-left: -3px;
    padding: 0;
    border: none;
    outline: none;
    background: linear-gradient(90deg, #111 94px, #808080 94px);
    -webkit-background-clip: text;
    background-clip: text;
    color: transparent;
    font: 13px "Noto Sans", sans-serif;
}
.extensions {
    display: flex;
    align-items: center;
    gap: 16px;
}
.extensions button {
    position: relative;
    width: 16px;
    height: 16px;
}
.extensions .more {
    width: 24px;
    height: 24px;
    margin-left: -4px;
    border-radius: 2px;
    background-color: #cdcdcd;
}
.badge {
    position: absolute;
    top: 10px;
    left: 11px;
    width: 11px;
    height: 12px;
    background-color: #4285f4;
    color: #fff;
    font-size: 9px;
    line-height: 12px;
}
.ext-abp {
    fill: #fff;
    font: bold 7px "Open Sans", sans-serif;
    text-anchor: middle;
}
.ext-in {
    fill: #fff;
    font: bold 11px "Open Sans", sans-serif;
    text-anchor: middle;
}
.ext-jb {
    fill: #fff;
    font: bold 9px "Liberation Sans", sans-serif;
    text-anchor: middle;
}

/* application menu */
.menubar {
    position: relative;
    z-index: 1;
    display: flex;
    flex: none;
    align-items: center;
    gap: 15px;
    height: 30px;
    padding: 0 12px 1px 17px;
    border-top: 1px solid #999;
    border-bottom: 1px solid #666;
    background-color: #ddd;
    box-shadow: 0 1px 4px rgba(0, 0, 0, .6);
    color: #333;
    font-family: Roboto, sans-serif;
}
.menubar .user {
    gap: 6px;
    margin-left: auto;
}

/* diagram */
.workspace {
    display: grid;
    flex: 1;
    grid-template-columns: 1fr 11px;
    grid-template-rows: 1fr 12px;
    min-height: 0;
}
.canvas {
    position: relative;
    overflow: hidden;
    background-color: #fff;
    background-image:
        linear-gradient(#e2e2e2 1px, transparent 1px),
        linear-gradient(90deg, #e2e2e2 1px, transparent 1px),
        linear-gradient(#f0f0f0 1px, transparent 1px),
        linear-gradient(90deg, #f0f0f0 1px, transparent 1px);
    background-size: 80px 80px, 80px 80px, 10px 10px, 10px 10px;
    background-position: -1px 0;
}
.vscroll {
    border-left: 1px solid #ddd;
    background-color: #f9f9f9;
}
.vthumb {
    height: 136px;
    border: 1px solid #bbb;
    background-color: #c9c9c9;
}
.hscroll {
    background-color: #f9f9f9;
}
.hthumb {
    width: 477px;
    height: 12px;
    margin-left: 1px;
    border: 1px solid #bbb;
    background-color: #c9c9c9;
}
.links {
    position: absolute;
    top: 0;
    left: 0;
    width: 100%;
    height: 100%;
}
.marks {
    pointer-events: none;
}
.entity {
    position: absolute;
    border: 1px solid #444;
    background-color: #f9f9f9;
    box-shadow: 1px 2px 8px rgba(0, 0, 0, .55);
    color: #444;
    font-family: "Noto Sans CJK SC", sans-serif;
    font-size: 12px;
    line-height: 18px;
}
.entity h2 {
    display: flex;
    align-items: center;
    justify-content: space-between;
    height: 23px;
    margin: 0;
    padding: 0 1px 0 2px;
    border-bottom: 1px solid #000;
    background-color: #d9d9d9;
    color: #333;
    font-size: 12px;
    font-weight: 500;
}
.entity h2 button {
    padding-top: 3px;
}
.entity p {
    height: 39px;
    margin: 0;
    padding: 0 2px;
    border-bottom: 1px solid #000;
    background-color: #e8e8e8;
    color: #222;
    font-family: Roboto, sans-serif;
    font-size: 12px;
}
.entity table {
    width: 100%;
    border-spacing: 0;
    table-layout: fixed;
}
.entity td {
    height: 23px;
    padding: 0 0 1px 3px;
    border-right: 1px solid #000;
    border-bottom: 1px solid #000;
    white-space: nowrap;
}
.entity td:last-child {
    padding: 0 0 4px 4px;
    border-right: none;
    line-height: 0;
}
.entity .col-key {
    padding: 1px 0 0 3px;
    line-height: 0;
}
.entity .selected {
    background-color: #f9f5fb;
}
.entity footer {
    display: flex;
    align-items: center;
    gap: 2px;
    height: 23px;
    padding: 0 0 1px 4px;
}
.entity a {
    color: #4a7ba8;
}
.icon {
    width: 16px;
    height: 16px;
}
.pencil {
    width: 14px;
    height: 14px;
    margin-right: 8px;
}
.updown {
    width: 9px;
    height: 13px;
}
.exercises { top: 100px; left: 197px; width: 224px; }
.exercises .col-key { width: 23px; }
.exercises .col-name { width: 102px; }
.exercises .col-type { width: 57px; }
.queries { top: 298px; left: 200px; width: 200px; }
.queries .col-key { width: 25px; }
.queries .col-name { width: 81px; }
.queries .col-type { width: 52px; }
.users { top: 242px; left: 451px; width: 200px; }
.users .col-key { width: 24px; }
.users .col-name { width: 62px; }
.users .col-type { width: 72px; }
.buyers { top: 36px; left: 780px; width: 206px; }
.buyers .col-key { width: 23px; }
.buyers .col-name { width: 74px; }
.buyers .col-type { width: 67px; }
.orders { top: 259px; left: 783px; width: 200px; }
.orders .col-key { width: 23px; }
.orders .col-name { width: 86px; }
.orders .col-type { width: 49px; }
.sellers { top: 175px; left: 1062px; width: 230px; }
.sellers .col-key { width: 23px; }
.sellers .col-name { width: 98px; }
.sellers .col-type { width: 67px; }

.note {
    position: absolute;
    margin: 0;
    color: #f00;
    font-family: "DejaVu Sans Condensed", "Noto Sans", sans-serif;
    font-size: 19px;
    line-height: 23px;
    white-space: nowrap;
}
.note-number { top: 103px; left: 472px; }
.note-sum { top: 159px; left: 465px; }
.note-right { top: 192px; left: 469px; }
.note-text { top: 399px; left: 454px; }
.note-points { top: 458px; left: 451px; }

.minimap {
    position: absolute;
    right: 8px;
    bottom: 8px;
    width: 173px;
    height: 109px;
    border: 1px solid #777;
    background-color: rgba(221, 221, 221, .92);
}
.minimap svg {
    display: block;
    margin: -1px;
}

/* downloads */
.downloads {
    display: flex;
    flex: none;
    align-items: center;
    height: 49px;
    padding: 0 12px 0 4px;
    border-top: 1px solid #ccc;
    background-color: #dfdfdf;
    color: #1f3a78;
    font-size: 12px;
}
.download {
    display: flex;
    flex: 0 1 227px;
    align-items: center;
    height: 36px;
    padding: 0 17px 0 18px;
    border-right: 1px solid #b5b5b5;
}
.download a {
    margin: 5px 0 0 15px;
    color: inherit;
    font-size: 13px;
    text-decoration: none;
    white-space: nowrap;
}
.download button {
    margin-left: auto;
}
.file-icon {
    flex: none;
    width: 13px;
    height: 17px;
    margin-bottom: 1px;
}
.chevron {
    width: 12px;
    height: 8px;
}
.show-all {
    height: 28px;
    margin: 0 13px 2px auto;
    padding: 0 14px;
    border: 1px solid #7484ac;
    border-radius: 3px;
    background-color: #d2d2d2;
}

/* taskbar */
.taskbar {
    display: flex;
    flex: none;
    gap: 1px;
    height: 39px;
    background: linear-gradient(90deg, #1c1a1a, #211f1f 30%, #282625 45%, #19191d 60%, #1b1a1c);
    color: #fff;
    font-size: 11px;
}
.taskbar > button {
    position: relative;
    flex: 0 1 48px;
}
.taskbar .current {
    background-color: #4b4949;
    box-shadow: inset 0 -2px #76b9ed;
}
.running::after {
    content: "";
    position: absolute;
    right: 4px;
    bottom: 0;
    left: 4px;
    height: 2px;
    background-color: #76b9ed;
}
.tray {
    display: flex;
    align-items: center;
    gap: 8px;
    margin: 0 3px 0 auto;
    padding-right: 20px;
    border-right: 1px solid #666;
}
.tray-up {
    margin-left: 14px;
}
.lang {
    margin-left: 2px;
}
.clock {
    width: 70px;
    line-height: 18px;
    text-align: center;
}
.app-s {
    fill: #fff;
    font: bold 19px "Open Sans", sans-serif;
    text-anchor: middle;
}
.app-ps {
    fill: #fff;
    font: bold 9px "Noto Sans", sans-serif;
    text-anchor: middle;
}
.app-hs {
    font: bold 10px "Open Sans", sans-serif;
    text-anchor: middle;
}
```
